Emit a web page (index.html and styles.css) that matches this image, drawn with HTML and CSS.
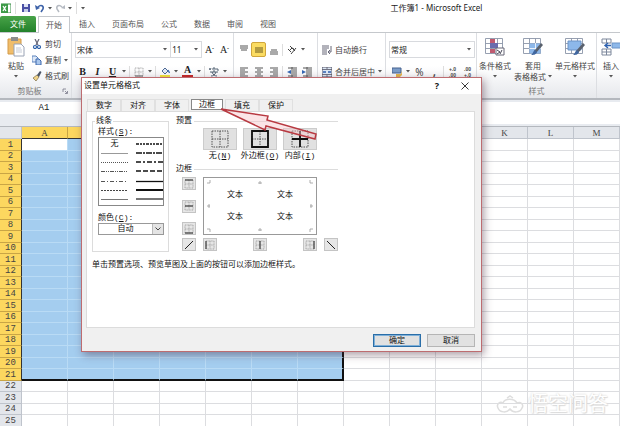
FILE: index.html
```html
<!DOCTYPE html>
<html lang="zh-CN">

<head>
  <meta charset="UTF-8" />
  <title>工作簿1 - Microsoft Excel</title>
  <link rel="stylesheet" href="styles.css">
</head>

<body>

  <!-- Shared icons -->
  <svg class="sprite">
    <symbol id="caret" viewBox="0 0 4 3"><path d="M0 0h4L2 2.6z" fill="#555" /></symbol>
    <symbol id="brush" viewBox="0 0 10 10"><path d="M1 7l4-3 2 2-3 4z" fill="#f0d48a" stroke="#7a6a45" stroke-width=".7" /><path d="M5 4l3-4 1.500 1L7 6z" fill="#4b5666" /></symbol>
    <symbol id="cells" viewBox="0 0 20 18"><path d="M.5.5h17v16H.5z" fill="#fff" /><path d="M.5.500h17v15H.5zM.5 5.500h17M.5 10.500h17M6.500.5v15M12.500.5v15" fill="none" stroke="#8b95a8" stroke-width=".9" /></symbol>
    <symbol id="dots" viewBox="0 0 18 18"><path d="M1 1h16v16H1zM9 1v16M1 9h16" fill="none" stroke="#555" stroke-dasharray="1.500 1" /></symbol>
    <symbol id="mini" viewBox="0 0 10 10"><path d="M1 1h8v8H1zM5 1v8M1 5h8" fill="none" stroke="#999" stroke-width=".8" stroke-dasharray="1 .6" /></symbol>
  </svg>

  <div class="app">

    <!-- Title bar -->
    <header class="titlebar">
      <div class="quick">
        <svg class="icon" viewBox="0 0 10 10"><path d="M0 1h10v9H0z" fill="#fff" stroke="#2f8a3c" /><path d="M0 1h7v9H0z" fill="#3d9a48" /><path d="M2 3l3 5M5 3L2 8" stroke="#fff" stroke-width="1.300" /></svg>
        <span class="sep"></span>
        <button class="tool" aria-label="保存"><svg class="icon" viewBox="0 0 10 10"><path d="M1 1h8v8H1z" fill="#4a50a5" /><path d="M3 1h4v3H3z" fill="#dfe4f5" /><path d="M3 6h4v3H3z" fill="#c5cbe8" /></svg></button>
        <button class="tool" aria-label="撤销"><svg class="icon" viewBox="0 0 10 10"><path d="M3 4c3-3 6-1 5 2L6 9" fill="none" stroke="#3d62a8" stroke-width="1.600" /><path d="M0 2l5 3-4 2z" fill="#3d62a8" /></svg></button>
        <svg class="caret" viewBox="0 0 4 3"><use href="#caret" /></svg>
        <button class="tool" aria-label="重做"><svg class="icon" viewBox="0 0 10 10"><path d="M7 4C4 1 1 3 2 6l2 3" fill="none" stroke="#b5bac2" stroke-width="1.500" /><path d="M10 2L6 5l4 1z" fill="#b5bac2" /></svg></button>
        <svg class="caret" viewBox="0 0 4 3"><use href="#caret" /></svg>
        <span class="sep"></span>
        <svg class="caret" viewBox="0 0 4 3"><use href="#caret" /></svg>
      </div>
      <h1>工作簿1 - Microsoft Excel</h1>
    </header>

    <nav class="menu">
      <button class="file">文件</button>
      <button class="current">开始</button>
      <button>插入</button>
      <button>页面布局</button>
      <button>公式</button>
      <button>数据</button>
      <button>审阅</button>
      <button>视图</button>
    </nav>

    <!-- Ribbon -->
    <section class="ribbon">
      <div class="group clipboard">
        <div class="group-body">
          <button class="big">
            <svg class="big-icon" viewBox="0 0 18 20"><path d="M1 2h13v15H1z" fill="#f0bd6a" stroke="#d39a48" /><path d="M4 0h7v4H4z" fill="#8d8d8d" /><path d="M7 7h7l3 3v9H7z" fill="#fff" stroke="#9aa3b5" /><path d="M9 11h5M9 13h6M9 15h6" stroke="#c4cad6" /></svg>
            粘贴
            <svg class="caret" viewBox="0 0 4 3"><use href="#caret" /></svg>
          </button>
          <div class="side">
            <button><svg class="icon" viewBox="0 0 10 10"><path d="M3 0l3 6M7 0L4 6" stroke="#667" stroke-width="1.200" /><circle cx="3" cy="8" r="1.500" fill="none" stroke="#2c5fa8" stroke-width="1.200" /><circle cx="7" cy="8" r="1.500" fill="none" stroke="#2c5fa8" stroke-width="1.200" /></svg>剪切</button>
            <button><svg class="icon" viewBox="0 0 10 10"><path d="M0 1h4l2 2v4H0z" fill="#dde8f7" stroke="#5d83bd" /><path d="M4 4h3l2 2v4H4z" fill="#a9c6ec" stroke="#3e68ac" /></svg>复制<svg class="caret" viewBox="0 0 4 3"><use href="#caret" /></svg></button>
            <button><svg class="icon" viewBox="0 0 10 10"><use href="#brush" /></svg>格式刷</button>
          </div>
        </div>
        <div class="group-name">剪贴板</div>
        <svg class="launcher" viewBox="0 0 6 6"><path d="M1 4V1h3M3 3l2 2M5.500 3v2.500H3" fill="none" stroke="#778" stroke-width=".8" /></svg>
      </div>

      <div class="group font">
        <div class="line">
          <div class="combo family"><select aria-label="字体"><option>宋体</option></select><svg class="caret" viewBox="0 0 4 3"><use href="#caret" /></svg></div>
          <div class="combo size"><select aria-label="字号"><option>11</option></select><svg class="caret" viewBox="0 0 4 3"><use href="#caret" /></svg></div>
          <button class="tool letter grow">A<sup>ˆ</sup></button>
          <button class="tool letter">A<sup>ˇ</sup></button>
        </div>
        <div class="line">
          <button class="tool letter"><b>B</b></button>
          <button class="tool letter"><b><i>I</i></b></button>
          <button class="tool letter"><b><u>U</u></b></button>
          <span class="drop"><svg class="caret" viewBox="0 0 4 3"><use href="#caret" /></svg></span>
          <span class="sep"></span>
          <button class="tool" aria-label="边框"><svg class="icon" viewBox="0 0 10 10"><use href="#mini" /><path d="M1 9h8" stroke="#666" /></svg></button>
          <span class="drop"><svg class="caret" viewBox="0 0 4 3"><use href="#caret" /></svg></span>
          <span class="sep"></span>
          <button class="tool" aria-label="填充颜色"><svg class="icon" viewBox="0 0 10 10"><path d="M2 4l3-3 3 3-3 3z" fill="#dfe8f5" stroke="#4c6793" /><path d="M8 3l1.500 3" stroke="#3567b5" stroke-width="1.300" /><path d="M0 8h10v2H0z" fill="#f3e63b" /></svg></button>
          <span class="drop"><svg class="caret" viewBox="0 0 4 3"><use href="#caret" /></svg></span>
          <button class="tool letter color"><b>A</b></button>
          <span class="drop"><svg class="caret" viewBox="0 0 4 3"><use href="#caret" /></svg></span>
          <span class="sep"></span>
          <button class="tool" aria-label="拼音"><svg class="icon" viewBox="0 0 10 10"><path d="M0 1l1 2 1-2M4 3V1h2v2M8 1v2h2M1 5h8M5 3v2M3 5c1 3 3 4 5 4M7 5c-1 3-3 4-5 4" fill="none" stroke="#456" stroke-width=".9" /></svg></button>
          <span class="drop"><svg class="caret" viewBox="0 0 4 3"><use href="#caret" /></svg></span>
        </div>
      </div>

      <div class="group align">
        <div class="block">
          <div class="line">
            <button class="tool" aria-label="顶端对齐"><svg class="icon" viewBox="0 0 10 10"><path d="M1 1h8M1 3h8M2 5h6" stroke="#555" /></svg></button>
            <button class="tool on" aria-label="垂直居中"><svg class="icon" viewBox="0 0 10 10"><path d="M1 3h8M1 5h8M1 7h8" stroke="#6b5a20" stroke-width="1.200" /></svg></button>
            <button class="tool" aria-label="底端对齐"><svg class="icon" viewBox="0 0 10 10"><path d="M2 5h6M1 7h8M1 9h8" stroke="#555" /></svg></button>
            <span class="sep"></span>
            <button class="tool" aria-label="方向"><svg class="icon" viewBox="0 0 10 10"><path d="M1 4l3 3M2 6l3-3 2 1M3 1l5 5M4 9l5-6" fill="none" stroke="#444" /></svg></button>
            <span class="drop"><svg class="caret" viewBox="0 0 4 3"><use href="#caret" /></svg></span>
          </div>
          <div class="line">
            <button class="tool" aria-label="左对齐"><svg class="icon" viewBox="0 0 10 10"><path d="M1 1h8M1 3h5M1 5h8M1 7h5M1 9h8" stroke="#555" /></svg></button>
            <button class="tool" aria-label="居中"><svg class="icon" viewBox="0 0 10 10"><path d="M1 1h8M3 3h4M1 5h8M3 7h4M1 9h8" stroke="#555" /></svg></button>
            <button class="tool" aria-label="右对齐"><svg class="icon" viewBox="0 0 10 10"><path d="M1 1h8M4 3h5M1 5h8M4 7h5M1 9h8" stroke="#555" /></svg></button>
            <span class="sep"></span>
            <button class="tool" aria-label="减少缩进"><svg class="icon" viewBox="0 0 10 10"><path d="M1 1h9M6 3h4M6 5h4M6 7h4M1 9h9M5 0v10" stroke="#555" /><path d="M4 3v4L0 5z" fill="#3567b5" /></svg></button>
            <button class="tool" aria-label="增加缩进"><svg class="icon" viewBox="0 0 10 10"><path d="M1 1h9M6 3h4M6 5h4M6 7h4M1 9h9M5 0v10" stroke="#555" /><path d="M0 3v4l4-2z" fill="#3567b5" /></svg></button>
          </div>
        </div>
        <div class="block wrap">
          <div class="line"><button class="text"><svg class="icon" viewBox="0 0 10 10"><path d="M0 1h7M0 3h7M0 5h5M0 7h5M0 9h5" stroke="#667" /><path d="M9 1v6H6M8 5L6 7l2 2" fill="none" stroke="#667" /></svg>自动换行</button></div>
          <div class="line"><button class="text"><svg class="icon" viewBox="0 0 10 10"><path d="M0 0h10v10H0z" fill="#dce7f5" stroke="#556" /><path d="M0 2.500h10M0 7.500h10M5 0v2M5 8v2" stroke="#556" stroke-width=".8" /><path d="M1 5h3M6 5h3" stroke="#2f62b0" stroke-width="1.500" /></svg>合并后居中<svg class="caret" viewBox="0 0 4 3"><use href="#caret" /></svg></button></div>
        </div>
      </div>

      <div class="group number">
        <div class="line">
          <div class="combo format"><select aria-label="数字格式"><option>常规</option></select><svg class="caret" viewBox="0 0 4 3"><use href="#caret" /></svg></div>
        </div>
        <div class="line">
          <button class="tool" aria-label="会计数字格式"><svg class="icon" viewBox="0 0 10 10"><path d="M0 1h9v5H0z" fill="#7b9cc8" stroke="#46638f" /><path d="M4 7h5l1-3v4l-2 2H4z" fill="#e3b34b" /></svg></button>
          <span class="drop"><svg class="caret" viewBox="0 0 4 3"><use href="#caret" /></svg></span>
          <button class="tool sign">%</button>
          <button class="tool sign"><b>,</b></button>
          <span class="sep"></span>
          <button class="tool digits"><span>+.0</span><span>.00</span></button>
          <button class="tool digits"><span>.00</span><span>+.0</span></button>
        </div>
      </div>

      <div class="group styles">
        <div class="group-body">
          <button class="big">
            <svg class="big-icon" viewBox="0 0 20 18"><use href="#cells" /><path d="M5 1h5v4H5zM5 11h5v4H5z" fill="#c05a70" /><path d="M5 5h8v5H5z" fill="#6a6cae" /><path d="M11 10h8v7h-8z" fill="#fff" stroke="#667" /><path d="M12 12l3 2-3 2M17 12l-2 4" fill="none" stroke="#445" /></svg>
            条件格式
            <svg class="caret" viewBox="0 0 4 3"><use href="#caret" /></svg>
          </button>
          <button class="big">
            <svg class="big-icon" viewBox="0 0 20 18"><use href="#cells" /><path d="M6.500 5.500h11v10h-11z" fill="#8db8ea" /><path d="M6.500 10.500h11M12.500 5v10" stroke="#fff" stroke-width=".8" /><path d="M18 5l2 2-7 8-2-2z" fill="#59606c" /><path d="M12 12l2 2c-1 3-4 3-6 3 2-1 2-4 4-5z" fill="#3f66a0" /></svg>
            套用
            <span class="with-caret">表格格式<svg class="caret" viewBox="0 0 4 3"><use href="#caret" /></svg></span>
          </button>
          <button class="big">
            <svg class="big-icon" viewBox="0 0 20 18"><use href="#cells" /><path d="M3 3h13v9H3z" fill="#8db8ea" stroke="#6d93c6" /><path d="M18 5l2 2-7 8-2-2z" fill="#59606c" /><path d="M12 12l2 2c-1 3-4 3-6 3 2-1 2-4 4-5z" fill="#3f66a0" /></svg>
            单元格样式
            <svg class="caret" viewBox="0 0 4 3"><use href="#caret" /></svg>
          </button>
        </div>
        <div class="group-name">样式</div>
      </div>

      <div class="group cells">
        <div class="group-body">
          <button class="big">
            <svg class="big-icon" viewBox="0 0 20 18"><path d="M1 1h9v4H1zM1 11h9v6H1zM5.500 1v4M5.500 11v6M1 14h9" fill="#fff" stroke="#7c879b" /><path d="M11 5h9v5h-9z" fill="#8db8ea" stroke="#6d93c6" /><path d="M10 7.500H4M7 5L4 7.500 7 10" fill="none" stroke="#2f62b0" stroke-width="1.400" /></svg>
            插入
            <svg class="caret" viewBox="0 0 4 3"><use href="#caret" /></svg>
          </button>
        </div>
      </div>
    </section>

    <!-- Formula bar -->
    <section class="formula">
      <div class="name-side"><input class="name-box" aria-label="名称框" value="A1" /></div>
      <input class="formula-box" aria-label="编辑栏" />
    </section>

    <!-- Sheet -->
    <main class="sheet">
      <table class="grid">
        <thead><tr id="letters"><th class="corner"></th></tr></thead>
        <tbody id="rows"></tbody>
      </table>
    </main>
  </div>

  <!-- Format cells dialog -->
  <form class="dialog" role="dialog" aria-labelledby="dialog-title" onsubmit="event.preventDefault();">
    <div class="dialog-head">
      <h2 id="dialog-title">设置单元格格式</h2>
      <button type="button" class="help">?</button>
      <button type="button" class="close" aria-label="关闭"><svg viewBox="0 0 8 8"><path d="M.5.500l7 7M7.500.5l-7 7" stroke="#222" stroke-width=".9" /></svg></button>
    </div>
    <div class="dialog-main">
      <div class="tabs" role="tablist">
        <button type="button" role="tab">数字</button>
        <button type="button" role="tab">对齐</button>
        <button type="button" role="tab">字体</button>
        <button type="button" role="tab" class="selected" aria-selected="true">边框</button>
        <button type="button" role="tab">填充</button>
        <button type="button" role="tab">保护</button>
      </div>

      <div class="panel">
        <div class="panel-columns">
          <fieldset class="strokes">
            <legend>线条</legend>
            <div class="caption">样式(<u>S</u>):</div>
            <div class="stroke-list">
              <div class="stroke-column">
                <span>无</span>
                <svg viewBox="0 0 27 4"><path d="M0 2.500h27" stroke="#999" /></svg>
                <svg viewBox="0 0 27 4"><path d="M0 2.500h27" stroke="#555" stroke-dasharray="1 1" /></svg>
                <svg viewBox="0 0 27 4"><path d="M0 2.500h27" stroke="#555" stroke-dasharray="4 1 1 1 1 1" /></svg>
                <svg viewBox="0 0 27 4"><path d="M0 2.500h27" stroke="#555" stroke-dasharray="4 2 1 2" /></svg>
                <svg viewBox="0 0 27 4"><path d="M0 2.500h27" stroke="#444" stroke-dasharray="2 1" /></svg>
                <svg viewBox="0 0 27 4"><path d="M0 2.500h27" stroke="#777" /></svg>
              </div>
              <div class="stroke-column">
                <svg viewBox="0 0 27 4"><path d="M0 2h27" stroke="#111" stroke-width="1.500" stroke-dasharray="3 1 2 1 2 1" /></svg>
                <svg viewBox="0 0 27 4"><path d="M0 2h27" stroke="#111" stroke-width="1.500" stroke-dasharray="6 1 2 1" /></svg>
                <svg viewBox="0 0 27 4"><path d="M0 2h27" stroke="#111" stroke-width="1.500" stroke-dasharray="5 2 2 2" /></svg>
                <svg viewBox="0 0 27 4"><path d="M0 2h27" stroke="#111" stroke-width="1.500" stroke-dasharray="5 2" /></svg>
                <svg viewBox="0 0 27 4"><path d="M0 2.500h27" stroke="#111" stroke-width="1.300" /></svg>
                <svg viewBox="0 0 27 4"><path d="M0 2h27" stroke="#111" stroke-width="2" /></svg>
                <svg viewBox="0 0 27 4"><path d="M0 2h27" stroke="#777" stroke-width="2" /></svg>
              </div>
            </div>
            <label class="caption color-label" for="color">颜色(<u>C</u>):</label>
            <div class="color-box">
              <select id="color"><option>自动</option></select>
              <span class="color-arrow"><svg viewBox="0 0 6 4"><path d="M.5.500L3 3 5.500.5" fill="none" stroke="#444" /></svg></span>
            </div>
          </fieldset>

          <div class="borders">
            <h3>预置</h3>
            <div class="presets">
              <div class="preset">
                <button type="button" id="none"><svg viewBox="0 0 18 18"><use href="#dots" /></svg></button>
                <label for="none">无(<u>N</u>)</label>
              </div>
              <div class="preset">
                <button type="button" id="outline"><svg viewBox="0 0 18 18"><use href="#dots" /><path d="M1 1h16v16H1z" fill="none" stroke="#111" stroke-width="1.800" /></svg></button>
                <label for="outline">外边框(<u>O</u>)</label>
              </div>
              <div class="preset">
                <button type="button" id="inside"><svg viewBox="0 0 18 18"><use href="#dots" /><path d="M9 1v16M1 9h16" stroke="#111" stroke-width="1.800" /></svg></button>
                <label for="inside">内部(<u>I</u>)</label>
              </div>
            </div>

            <h3>边框</h3>
            <div class="editor">
              <div class="edges">
                <button type="button" aria-label="上边框"><svg viewBox="0 0 10 10"><use href="#mini" /><path d="M1 1h8" stroke="#222" /></svg></button>
                <button type="button" aria-label="中横线"><svg viewBox="0 0 10 10"><use href="#mini" /><path d="M1 5h8" stroke="#222" /></svg></button>
                <button type="button" aria-label="下边框"><svg viewBox="0 0 10 10"><use href="#mini" /><path d="M1 9h8" stroke="#222" /></svg></button>
              </div>
              <div class="preview">
                <svg class="corners" viewBox="0 0 112 56"><path d="M3 5h3V2M106 2v3h3M3 51h3v3M109 51h-3v3M54 5h4M56 3v3M54 52h4M56 50v3M3 28h3M5 26v4M109 28h-3M107 26v4" fill="none" stroke="#999" stroke-width=".8" /></svg>
                <span>文本</span><span>文本</span><span>文本</span><span>文本</span>
              </div>
              <span></span>
              <button type="button" aria-label="斜线"><svg viewBox="0 0 10 10"><path d="M1 9l8-8" stroke="#222" /></svg></button>
              <div class="edges across">
                <button type="button" aria-label="左边框"><svg viewBox="0 0 10 10"><use href="#mini" /><path d="M1 1v8" stroke="#222" /></svg></button>
                <button type="button" aria-label="中竖线"><svg viewBox="0 0 10 10"><use href="#mini" /><path d="M5 1v8" stroke="#222" /></svg></button>
                <button type="button" aria-label="右边框"><svg viewBox="0 0 10 10"><use href="#mini" /><path d="M9 1v8" stroke="#222" /></svg></button>
              </div>
              <button type="button" aria-label="反斜线"><svg viewBox="0 0 10 10"><path d="M1 1l8 8" stroke="#222" /></svg></button>
            </div>
          </div>
        </div>
        <p class="hint">单击预置选项、预览草图及上面的按钮可以添加边框样式。</p>
      </div>

      <div class="actions">
        <button type="submit" class="ok">确定</button>
        <button type="button">取消</button>
      </div>
    </div>
  </form>

  <!-- Pointer to the border tab -->
  <svg class="pointer" viewBox="0 0 100 34">
    <path d="M1 2l47 7-1 4 49 14-1 5-49-13-1 4z" fill="#f6c6ca" fill-opacity=".45" stroke="#b83a42" stroke-width="1.500" />
  </svg>

  <div class="watermark">
    <svg viewBox="0 0 28 18"><path d="M2 13c-2-4 2-7 5-5 2-5 11-5 14 0 4-2 7 2 5 5-2 5-9 5-12 1-3 4-10 4-12-1zM7 12h4M17 12h4M11 3l3-2 3 2" fill="none" stroke="#dedede" stroke-width="1.500" /></svg>
    悟空问答
  </div>

  <script>
    const letters = 'ABCDEFGHIJKLM'.split('');
    const lastCol = 6;
    const lastRow = 21;

    letters.forEach((letter, i) => {
      const th = document.createElement('th');
      th.textContent = letter;
      if (i <= lastCol) th.className = 'active';
      document.getElementById('letters').appendChild(th);
    });

    for (let r = 1; r <= 25; r++) {
      const tr = document.createElement('tr');
      const th = document.createElement('th');
      th.textContent = r;
      if (r <= lastRow) th.className = 'active';
      tr.appendChild(th);
      letters.forEach((letter, i) => {
        const td = document.createElement('td');
        if (r <= lastRow && i <= lastCol) {
          td.classList.add('picked');
          if (r === 1 && i === 0) td.classList.add('cursor');
          if (r === lastRow) td.classList.add('end-row');
          if (i === lastCol) td.classList.add('end-col');
        }
        tr.appendChild(td);
      });
      document.getElementById('rows').appendChild(tr);
    }
  </script>
</body>

</html>
```
FILE: styles.css
```css
* {
  box-sizing: border-box;
}

body {
  margin: 0;
  font-family: "Noto Sans", "Noto Sans CJK SC", sans-serif;
  font-size: 8px;
  line-height: 10px;
  color: #444;
  background: #fff;
}

button,
select,
input {
  margin: 0;
  padding: 0;
  border: none;
  border-radius: 0;
  background: none;
  font: inherit;
  color: inherit;
}

select {
  appearance: none;
}

h1,
h2,
h3,
p {
  margin: 0;
  font-size: 8px;
  font-weight: normal;
}

svg {
  display: block;
  flex: none;
}

.sprite {
  display: none;
}

.app {
  display: flex;
  flex-direction: column;
  height: 100vh;
  overflow: hidden;
}

.icon {
  width: 10px;
  height: 10px;
}

.caret {
  width: 4px;
  height: 3px;
}

.sep {
  width: 1px;
  height: 12px;
  margin: 0 1px;
  background: #ddd;
}

.tool {
  display: flex;
  flex: none;
  align-items: center;
  justify-content: center;
  width: 15px;
  height: 15px;
}

.drop {
  display: flex;
  align-items: center;
  justify-content: center;
  width: 8px;
}

/* title bar */
.titlebar {
  display: flex;
  align-items: center;
  height: 16px;
}

.quick {
  display: flex;
  align-items: center;
  gap: 2px;
  width: 63%;
  padding-left: 1px;
}

.quick .tool {
  width: 12px;
}

.quick .sep {
  margin: 0 2px;
}

.titlebar h1 {
  color: #222;
  white-space: nowrap;
}

.menu {
  display: flex;
  gap: 1px;
  height: 17px;
  border-bottom: 1px solid #c5c8cc;
}

.menu button {
  padding: 0 8px;
  color: #555;
}

.menu .file {
  width: 36px;
  margin-right: 1px;
  color: #fff;
  background: linear-gradient(#48a348, #23812b);
  border-radius: 2px 2px 0 0;
}

.menu .current {
  height: 17px;
  background: #fff;
  border: 1px solid #c5c8cc;
  border-bottom: none;
  padding: 0 7px;
}

/* ribbon */
.ribbon {
  display: flex;
  flex: none;
  height: 67px;
  overflow: hidden;
  background: linear-gradient(#fff 50%, #e6e8ec);
  border-bottom: 2px solid #b4b8be;
}

.group {
  display: flex;
  flex: none;
  flex-direction: column;
  border-right: 1px solid #dcdee2;
}

.group-body {
  display: flex;
  flex: 1;
}

.group-name {
  padding-bottom: 2px;
  text-align: center;
  color: #777;
}

.big {
  display: flex;
  flex-direction: column;
  align-items: center;
  line-height: 11px;
  padding-top: 4px;
  white-space: nowrap;
}

.big-icon {
  width: 20px;
  height: 20px;
  margin-bottom: 3px;
}

.big > .caret {
  margin-top: 4px;
}

.with-caret {
  display: flex;
  align-items: center;
  gap: 2px;
}

.clipboard {
  position: relative;
  width: 72px;
}

.clipboard .big {
  width: 32px;
}

.launcher {
  position: absolute;
  right: 3px;
  bottom: 4px;
  width: 6px;
  height: 6px;
}

.clipboard .group-name {
  padding-right: 12px;
}

.side {
  display: flex;
  flex-direction: column;
  gap: 6px;
  padding-top: 6px;
}

.side button,
.text {
  display: flex;
  align-items: center;
  gap: 3px;
  white-space: nowrap;
}

.font,
.number {
  gap: 5px;
  padding: 8px 1px 0 3px;
}

.line {
  display: flex;
  align-items: center;
  height: 17px;
}

.font {
  width: 162px;
}

.combo {
  display: flex;
  align-items: center;
  height: 17px;
  padding: 0 3px 0 1px;
  border: 1px solid #d8dade;
  background: #fff;
}

.combo select {
  flex: 1;
  min-width: 0;
  color: #222;
}

.family {
  width: 97px;
}

.size {
  width: 31px;
  border-left: none;
}

.letter {
  font-family: "Liberation Serif", serif;
  font-size: 10px;
  color: #222;
}

.letter sup {
  font-size: 6px;
  line-height: 6px;
}

.color {
  height: 13px;
  border-bottom: 3px solid #c62828;
  background: none;
  width: 11px;
  margin: 0 2px;
}

.align {
  flex-direction: row;
  width: 152px;
}

.block {
  display: flex;
  flex-direction: column;
  gap: 5px;
  width: 84px;
  padding: 8px 0 0 2px;
  border-right: 1px solid #dcdee2;
}

.wrap {
  width: auto;
  padding-left: 4px;
  border-right: none;
}

.on {
  background: #fbdc62;
  border: 1px solid #d0a63c;
  border-radius: 2px;
}

.number {
  width: 91px;
}

.format {
  width: 86px;
}

.sign {
  font-size: 10px;
}

.digits {
  flex-direction: column;
  font-family: "Liberation Sans", sans-serif;
  font-size: 5px;
  font-weight: bold;
  line-height: 6px;
}

.styles {
  width: 120px;
}

.styles .group-body {
  gap: 3px;
  padding-left: 2px;
}

.cells {
  padding-left: 4px;
  border-right: none;
}

/* formula bar */
.formula {
  display: flex;
  flex: none;
  height: 27px;
  padding: 2px 0;
  background: #e8ebf0;
  border-bottom: 1px solid #b4b8be;
}

.name-side {
  width: 88px;
}

.name-box {
  display: block;
  width: 100%;
  height: 12px;
  background: #fff;
  font-family: "Liberation Mono", monospace;
  font-size: 9px;
  text-align: center;
  color: #222;
}

.formula-box {
  flex: 1;
  min-width: 0;
  background: #fff;
}

/* sheet */
.sheet {
  flex: 1;
  overflow: hidden;
}

.grid {
  width: 100%;
  table-layout: fixed;
  border-collapse: separate;
  border-spacing: 0;
}

.grid th,
.grid td {
  padding: 0;
  border-right: 1px solid #dcdde0;
  border-bottom: 1px solid #dcdde0;
}

.grid th {
  font-family: "Liberation Mono", monospace;
  font-size: 9px;
  font-weight: normal;
  line-height: 10px;
  color: #444;
  background: #e3e6eb;
  border-color: #bfc4cc;
}

.grid thead th {
  font-family: "Liberation Serif", serif;
  height: 12px;
}

.grid .corner {
  width: 22px;
}

.grid th.active {
  background: #fcd75f;
  border-color: #c9a545;
}

.grid thead th.active {
  border-bottom-color: #333;
}

.grid tbody th.active {
  border-right-color: #333;
}

.grid tbody tr {
  height: 12px;
}

.grid tbody tr:nth-child(even) {
  height: 11px;
}

.grid .picked {
  background: #a4cdef;
  border-color: #b9dbf5;
}

.grid .cursor {
  background: #fff;
}

.grid .end-row {
  border-bottom: 2px solid #111;
}

.grid .end-col {
  border-right: 2px solid #111;
}

/* dialog */
.dialog {
  position: absolute;
  left: 81px;
  top: 77px;
  width: 401px;
  border: 1px solid #bd6c70;
  background: #fff;
  box-shadow: 2px 3px 8px rgba(70, 40, 60, 0.45);
  font-family: "Liberation Mono", "Noto Sans CJK SC", monospace;
  color: #111;
}

.dialog-head {
  display: flex;
  align-items: center;
  height: 16px;
  padding: 0 12px 0 2px;
}

.dialog-head h2 {
  flex: 1;
}

.help {
  width: 12px;
  margin-right: 18px;
  font-family: "Noto Sans", sans-serif;
  font-size: 9px;
  font-weight: bold;
}

.close svg {
  width: 8px;
  height: 8px;
}

.dialog-main {
  padding: 5px 6px 4px 4px;
  background: #f0f0f0;
}

.tabs {
  display: flex;
  padding-left: 1px;
}

.tabs button {
  width: 34px;
  height: 12px;
  border: 1px solid #e0e0e0;
  border-bottom: none;
}

.tabs .selected {
  margin: 0 2px;
  width: 32px;
  height: 11px;
  border: 1px solid #888;
  background: #fff;
}

.panel {
  min-height: 217px;
  padding: 4px 5px;
  border: 1px solid #dcdcdc;
  background: #fff;
}

.panel-columns {
  display: flex;
  gap: 7px;
}

.strokes {
  width: 77px;
  min-width: 0;
  height: 136px;
  margin: 0;
  padding: 1px 4px 0 5px;
  border: 1px solid #dcdcdc;
}

.strokes legend {
  margin-left: -3px;
  padding: 0 1px;
}

.caption {
  display: block;
}

.stroke-list {
  display: grid;
  grid-template-columns: 1fr 1fr;
  gap: 8px;
  height: 69px;
  padding: 1px 2px;
  border: 1px solid #888;
}

.stroke-column {
  display: flex;
  flex-direction: column;
  justify-content: space-between;
  align-items: center;
  padding: 3px 0;
}

.stroke-column svg {
  width: 27px;
  height: 4px;
}

.stroke-column span {
  height: 4px;
  line-height: 4px;
}

.color-label {
  margin-top: 7px;
}

.color-box {
  display: flex;
  height: 12px;
  border: 1px solid #999;
}

.color-box select {
  flex: 1;
  min-width: 0;
  text-align: center;
  text-align-last: center;
}

.color-arrow {
  display: flex;
  align-items: center;
  justify-content: center;
  width: 11px;
  background: #e4e4e4;
  border-left: 1px solid #bbb;
}

.color-arrow svg {
  width: 6px;
  height: 4px;
}

.borders {
  width: 162px;
}

.borders h3 {
  display: flex;
  align-items: center;
  gap: 2px;
}

.borders h3::after {
  content: "";
  flex: 1;
  height: 1px;
  background: #dcdcdc;
}

.presets {
  display: flex;
  gap: 6px;
  padding: 2px 0 3px 27px;
}

.preset {
  display: flex;
  flex-direction: column;
  align-items: center;
  width: 34px;
  white-space: nowrap;
}

.preset button {
  display: flex;
  align-items: center;
  justify-content: center;
  width: 34px;
  height: 22px;
  background: #e1e1e1;
  border: 1px solid #ccc;
}

.preset svg {
  width: 18px;
  height: 18px;
}

.preset label {
  margin-top: 1px;
}

.editor {
  display: grid;
  grid-template-columns: 14px 114px 14px;
  gap: 3px 7px;
  padding: 3px 0 0 6px;
}

.edges {
  display: flex;
  flex-direction: column;
  justify-content: space-between;
}

.across {
  flex-direction: row;
}

.editor button {
  display: flex;
  align-items: center;
  justify-content: center;
  width: 14px;
  height: 13px;
  background: #e6e6e6;
  border: 1px solid #c4c4c4;
}

.editor button svg {
  width: 10px;
  height: 10px;
}

.preview {
  position: relative;
  display: grid;
  grid-template-columns: 1fr 1fr;
  place-items: center;
  height: 58px;
  padding: 6px;
  border: 1px solid #999;
}

.corners {
  position: absolute;
  left: 0;
  top: 0;
  width: 112px;
  height: 56px;
}

.hint {
  margin-top: 8px;
  white-space: nowrap;
}

.actions {
  display: flex;
  justify-content: flex-end;
  gap: 6px;
  padding-top: 6px;
}

.actions button {
  width: 48px;
  height: 13px;
  border: 1px solid #b5b5b5;
  background: #e1e1e1;
}

.actions .ok {
  border: 1px solid #2a6ea8;
  box-shadow: inset 0 0 0 1px #7fb0d8;
}

/* overlays */
.pointer {
  position: absolute;
  left: 220px;
  top: 107px;
  width: 100px;
  height: 34px;
}

.watermark {
  position: absolute;
  right: 12px;
  bottom: 12px;
  display: flex;
  align-items: center;
  gap: 4px;
  font-size: 20px;
  line-height: 20px;
  color: #fff;
  text-shadow: 0 0 2px #ccc, 1px 1px 1px #ddd;
}

.watermark svg {
  width: 28px;
  height: 18px;
}
```
